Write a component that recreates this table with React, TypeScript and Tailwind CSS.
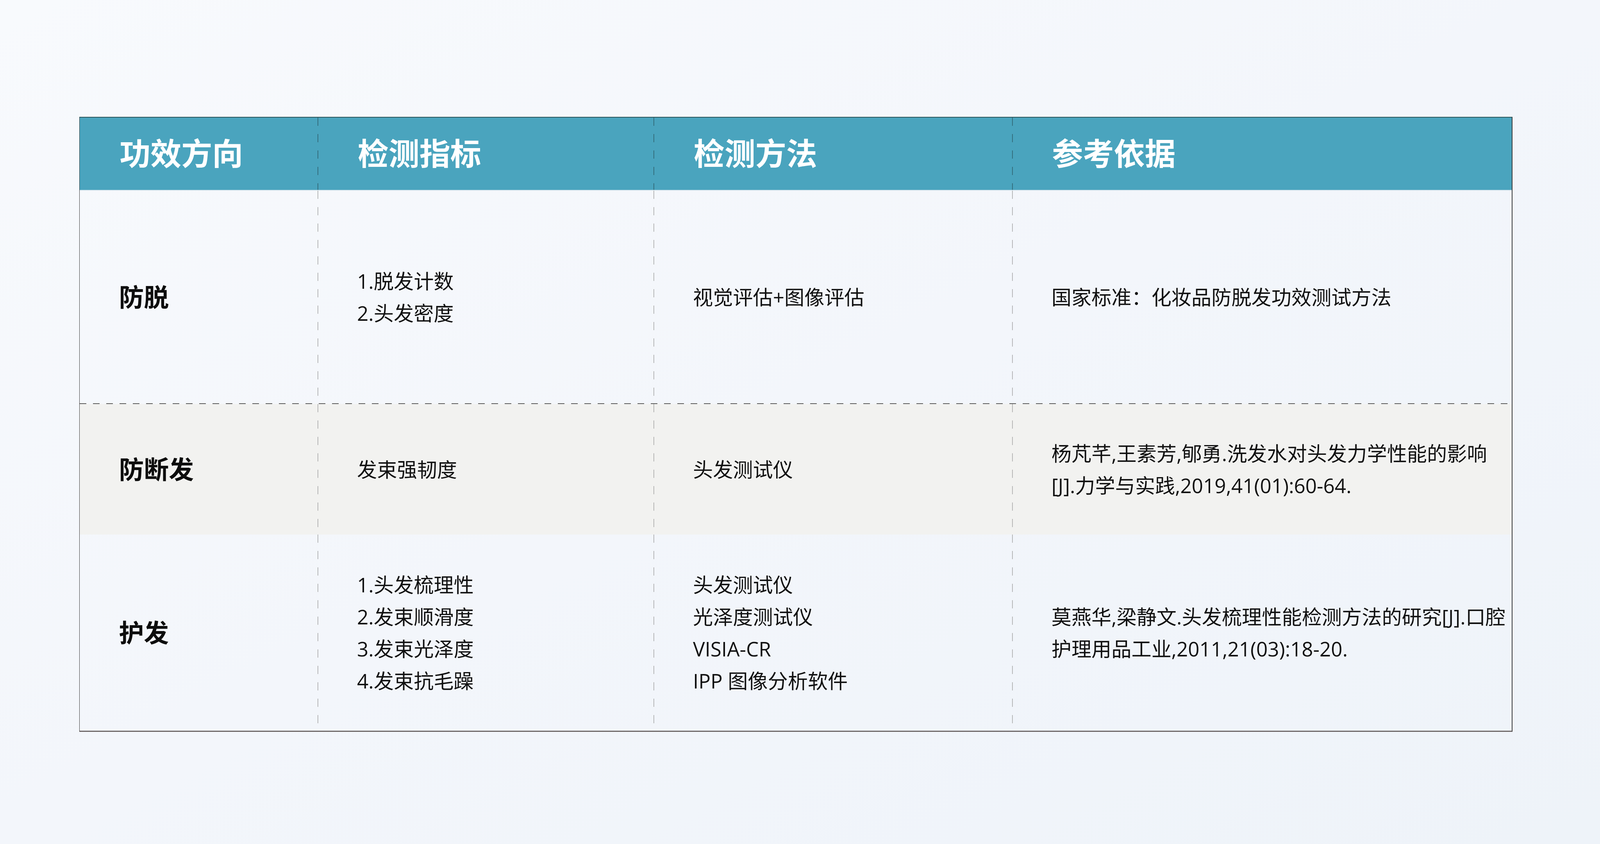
const headers = ["功效方向", "检测指标", "检测方法", "参考依据"];

const rows = [
  {
    label: "防脱",
    height: "h-[544px]",
    bg: "",
    indicators: ["1.脱发计数", "2.头发密度"],
    methods: ["视觉评估+图像评估"],
    refs: ["国家标准：化妆品防脱发功效测试方法"],
  },
  {
    label: "防断发",
    height: "h-[334px]",
    bg: "bg-[#f2f2f0]",
    indicators: ["发束强韧度"],
    methods: ["头发测试仪"],
    refs: ["杨芃芊,王素芳,郇勇.洗发水对头发力学性能的影响", "[J].力学与实践,2019,41(01):60-64."],
  },
  {
    label: "护发",
    height: "h-[502px]",
    bg: "",
    indicators: ["1.头发梳理性", "2.发束顺滑度", "3.发束光泽度", "4.发束抗毛躁"],
    methods: ["头发测试仪", "光泽度测试仪", "VISIA-CR", "IPP 图像分析软件"],
    refs: ["莫燕华,梁静文.头发梳理性能检测方法的研究[J].口腔", "护理用品工业,2011,21(03):18-20."],
  },
];

const bodyDash =
  "bg-[repeating-linear-gradient(to_bottom,#a3a3a3_0_21px,transparent_21px_42px)] bg-no-repeat bg-[length:1.5px_100%]";

function Lines({ items }: { items: string[] }) {
  return (
    <div className="flex flex-col text-[1.25vw] leading-[82px] text-[#111] whitespace-nowrap">
      {items.map((t) => (
        <span key={t}>{t}</span>
      ))}
    </div>
  );
}

export default function App() {
  return (
    <main
      className="h-screen w-full overflow-hidden bg-gradient-to-br from-[#f8fafd] via-[#f3f6fb] to-[#eef3f9] pl-[4.95vw] pt-[299px]"
      style={{ fontFamily: '"Open Sans", "Noto Sans CJK SC", sans-serif' }}
    >
      <div className="grid w-[89.57vw] grid-cols-[728fr_1027fr_1096fr_1527fr] border-t-2 border-l border-r-2 border-b-[3px] border-t-[#2b5559] border-l-[#3a3a3a] border-r-[#3a3a3a] border-b-[#6e6868]">
        {headers.map((h, i) => (
          <div
            key={h}
            className={
              "flex h-[187px] items-center border-b-2 border-[#d9e6ee] bg-[#4aa4be] pl-[2.5vw] text-[1.93vw] font-bold text-white " +
              (i > 0
                ? "bg-[repeating-linear-gradient(to_bottom,#2d5d69_0_21px,transparent_21px_42px)] bg-no-repeat bg-[length:1.5px_100%]"
                : "")
            }
          >
            {h}
          </div>
        ))}

        {rows.map((r, ri) => (
          <div key={r.label} className="contents">
            {ri === 1 && (
              <div className="col-span-4 h-[2px] bg-[repeating-linear-gradient(to_right,#5a5a5a_0_17px,transparent_17px_34px)]" />
            )}
            <div className={`flex ${r.height} items-center pl-[2.46vw] ${r.bg}`}>
              <span className="text-[1.56vw] font-bold text-[#0d0d0d]">{r.label}</span>
            </div>
            <div className={`flex ${r.height} items-center pl-[2.46vw] ${r.bg} ${bodyDash}`}>
              <Lines items={r.indicators} />
            </div>
            <div className={`flex ${r.height} items-center pl-[2.46vw] ${r.bg} ${bodyDash}`}>
              <Lines items={r.methods} />
            </div>
            <div className={`flex ${r.height} items-center pl-[2.46vw] ${r.bg} ${bodyDash}`}>
              <Lines items={r.refs} />
            </div>
          </div>
        ))}
      </div>
    </main>
  );
}
